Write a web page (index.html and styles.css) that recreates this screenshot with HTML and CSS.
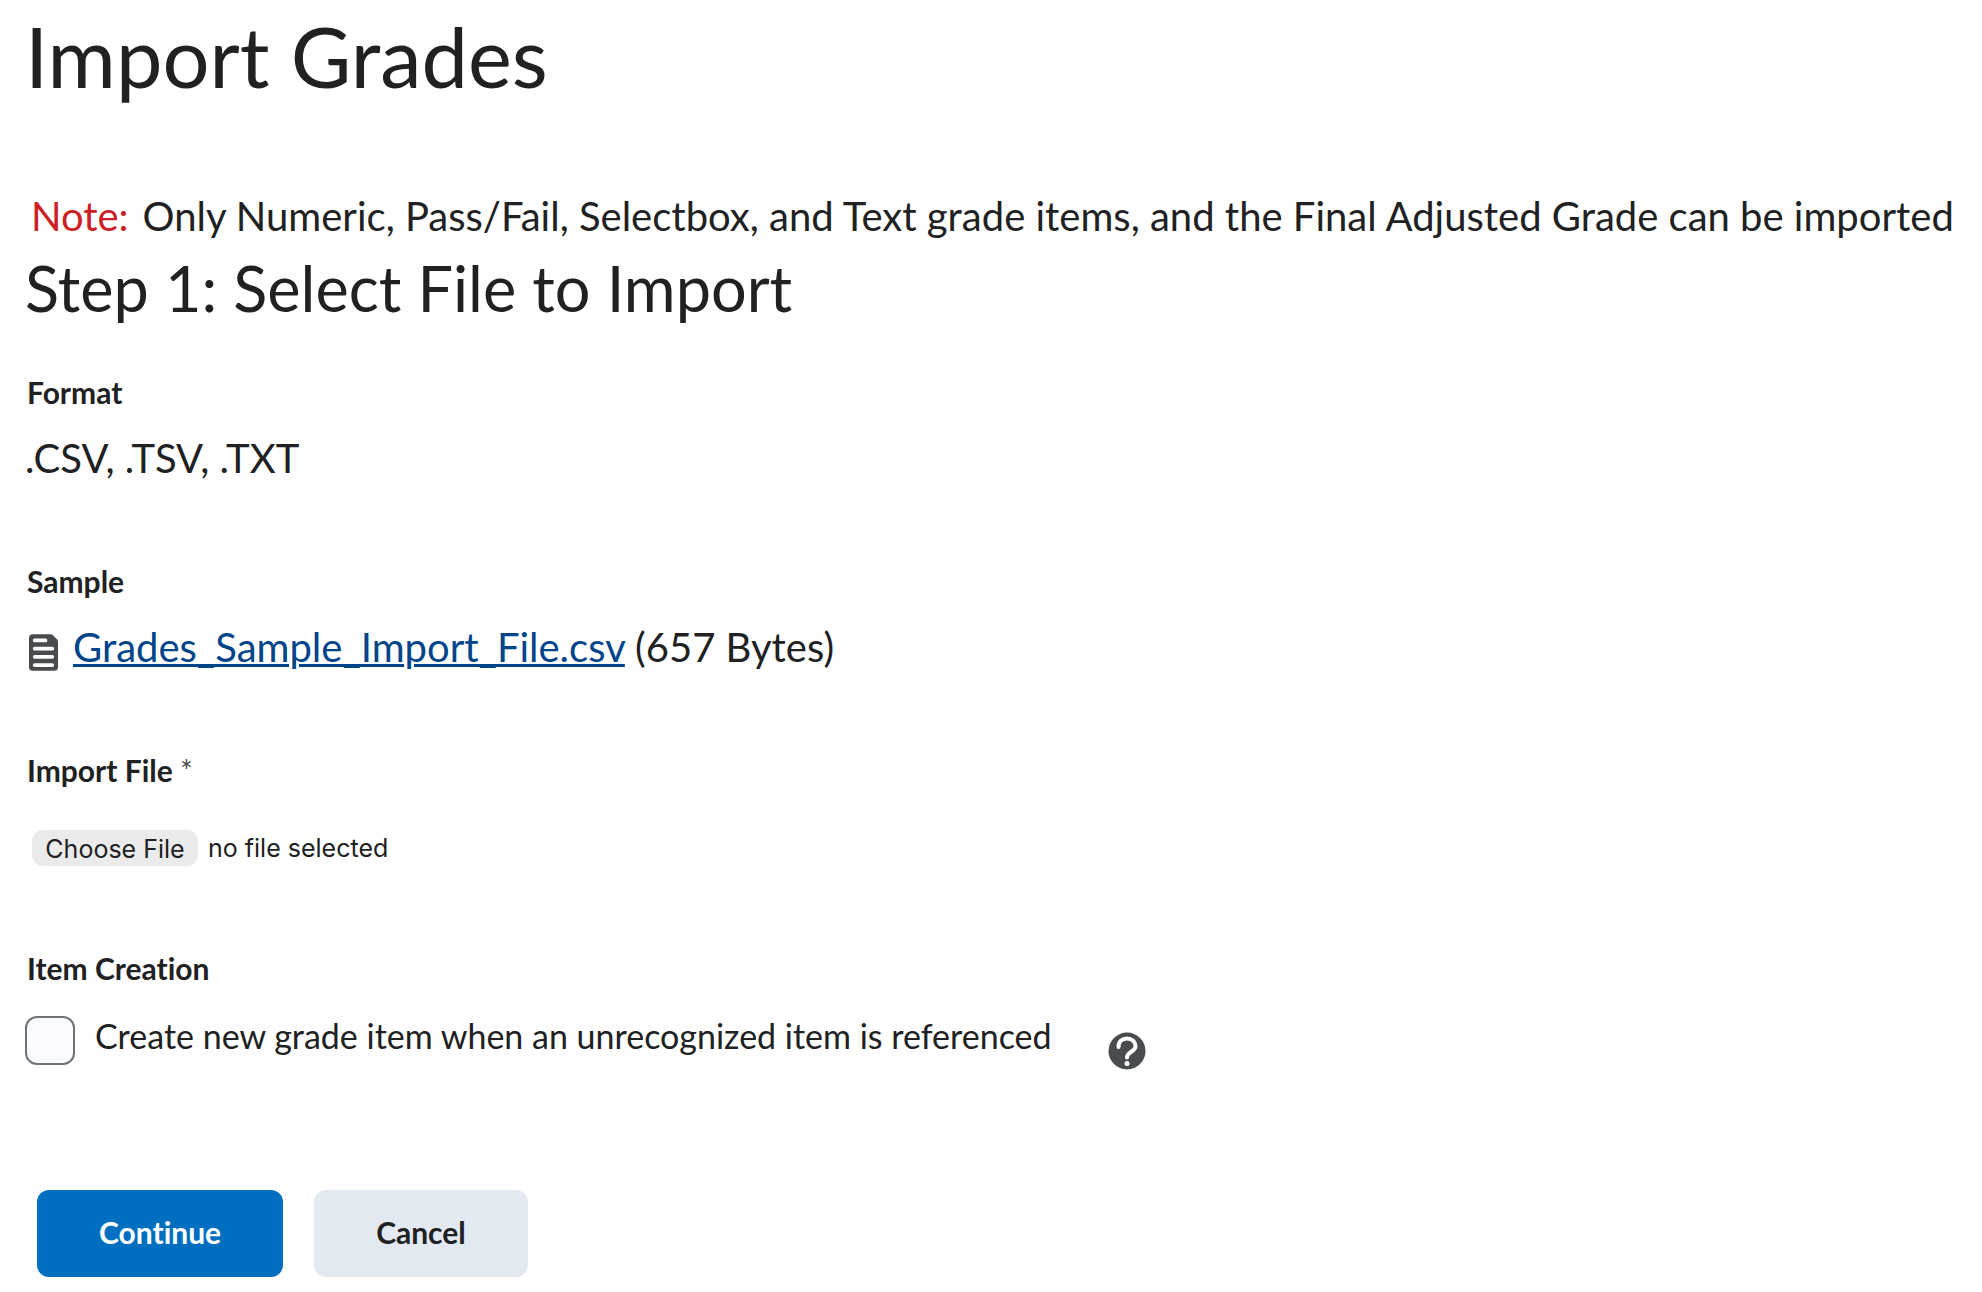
FILE: index.html
```
<!DOCTYPE html>
<html lang="en">
<head>
  <meta charset="UTF-8" />
  <meta name="viewport" content="width=device-width, initial-scale=1.0"/>
  <title>Import Grades</title>
  <link rel="stylesheet" href="styles.css">
</head>
<body>

  <main class="page">
    <h1>Import Grades</h1>

    <p class="note"><span class="note-label">Note:</span>Only Numeric, Pass/Fail, Selectbox, and Text grade items, and the Final Adjusted Grade can be imported</p>

    <h2>Step 1: Select File to Import</h2>

    <form>
      <!-- Format -->
      <div class="field">
        <div class="field-label">Format</div>
        <div class="field-value">.CSV, .TSV, .TXT</div>
      </div>

      <!-- Sample -->
      <div class="field">
        <div class="field-label">Sample</div>
        <div class="field-value sample">
          <svg class="file-icon" viewBox="0 0 30 38" aria-hidden="true">
            <path fill="#494c4e" d="M4 0h18.500a3 3 0 0 1 2 .8l4.700 4.700a3 3 0 0 1 .8 2V34a4 4 0 0 1-4 4H4a4 4 0 0 1-4-4V4a4 4 0 0 1 4-4z"/>
            <path stroke="#fff" stroke-width="4" stroke-linecap="round" d="M6 6.500h11M6 15h18M6 23.500h18M6 32h18"/>
          </svg>
          <span><a href="#">Grades_Sample_Import_File.csv</a> (657 Bytes)</span>
        </div>
      </div>

      <!-- Import File -->
      <div class="field">
        <label class="field-label" for="importFile">Import File <span class="required">*</span></label>
        <div class="file-row">
          <input type="file" id="importFile" accept=".csv,.tsv,.txt" required />
          <span>no file selected</span>
        </div>
      </div>

      <!-- Item Creation -->
      <div class="field-label">Item Creation</div>
      <div class="check-row">
        <input type="checkbox" id="createItem" />
        <label for="createItem">Create new grade item when an unrecognized item is referenced</label>
        <button type="button" class="help" aria-label="Help">
          <svg viewBox="0 0 38 38" aria-hidden="true">
            <circle cx="19" cy="19" r="18.500" fill="#494c4e"/>
            <path fill="none" stroke="#fff" stroke-width="4" stroke-linecap="round" d="M10.500 15C10.500 9.500 14 6.500 19 6.500S27.500 10 27.500 14.200C27.500 20 19 19.500 19 25.500"/>
            <circle cx="19" cy="31.500" r="2.500" fill="#fff"/>
          </svg>
        </button>
      </div>

      <div class="actions">
        <button type="submit" class="btn btn-primary">Continue</button>
        <button type="button" class="btn">Cancel</button>
      </div>
    </form>
  </main>

</body>
</html>
```
FILE: styles.css
```
* {
  margin: 0;
  padding: 0;
  box-sizing: border-box;
}

body {
  background: #fff;
  color: #202122;
  font-family: Lato, sans-serif;
  font-size: 40px;
  line-height: 60px;
  font-variant-ligatures: no-common-ligatures;
}

.page {
  padding: 6px 0 16px 25px;
}

h1 {
  font-size: 83px;
  line-height: 100px;
  font-weight: 400;
  margin-bottom: 80px;
}

h2 {
  font-size: 63px;
  line-height: 76px;
  font-weight: 400;
  margin: 4px 0 46px;
}

.note {
  padding-left: 6px;
}

.note-label {
  color: #cd2026;
  margin-right: 14px;
}

/* Form fields */
.field {
  margin-bottom: 73px;
}

.field-label {
  display: block;
  font-size: 30px;
  line-height: 40px;
  font-weight: 700;
  margin-bottom: 16px;
  padding-left: 2px;
}

.required {
  color: #494c4e;
  font-weight: 400;
}

.sample {
  display: flex;
  align-items: center;
  gap: 15px;
  padding-left: 4px;
}

.file-icon {
  width: 29px;
  height: 37px;
  margin-top: 10px;
}

a {
  color: #004489;
  text-decoration-thickness: 3px;
}

/* File picker */
.file-row {
  display: flex;
  align-items: center;
  gap: 10px;
  padding: 24px 0 9px 7px;
  font-family: Inter, sans-serif;
  font-size: 25px;
  line-height: 36px;
}

input[type="file"] {
  width: 166px;
  height: 36px;
  font: inherit;
  color: transparent;
  overflow: hidden;
}

input[type="file"]::file-selector-button {
  width: 166px;
  height: 36px;
  padding-bottom: 2px;
  border: none;
  border-radius: 11px;
  background: #ebebeb;
  color: #202122;
  font: inherit;
}

/* Checkbox */
.check-row {
  display: flex;
  align-items: flex-start;
  padding-top: 12px;
  font-size: 34px;
  line-height: 40px;
}

input[type="checkbox"] {
  appearance: none;
  width: 50px;
  height: 49px;
  border: 2px solid #6e7376;
  border-radius: 12px;
  background: #f9fbff;
}

input[type="checkbox"]:checked {
  background: #006fbf;
}

.check-row label {
  margin: 0 56px 0 20px;
}

.help {
  width: 38px;
  height: 38px;
  margin-top: 16px;
  border: none;
  background: none;
  cursor: pointer;
}

.help svg {
  display: block;
}

/* Buttons */
.actions {
  display: flex;
  gap: 31px;
  margin-top: 120px;
  padding-left: 12px;
}

.btn {
  height: 87px;
  padding: 0 62px 4px;
  border: none;
  border-radius: 12px;
  background: #e3e9f1;
  color: #202122;
  font-family: inherit;
  font-size: 30px;
  font-weight: 700;
  font-variant-ligatures: inherit;
  cursor: pointer;
}

.btn-primary {
  background: #006fbf;
  color: #fff;
}
```
